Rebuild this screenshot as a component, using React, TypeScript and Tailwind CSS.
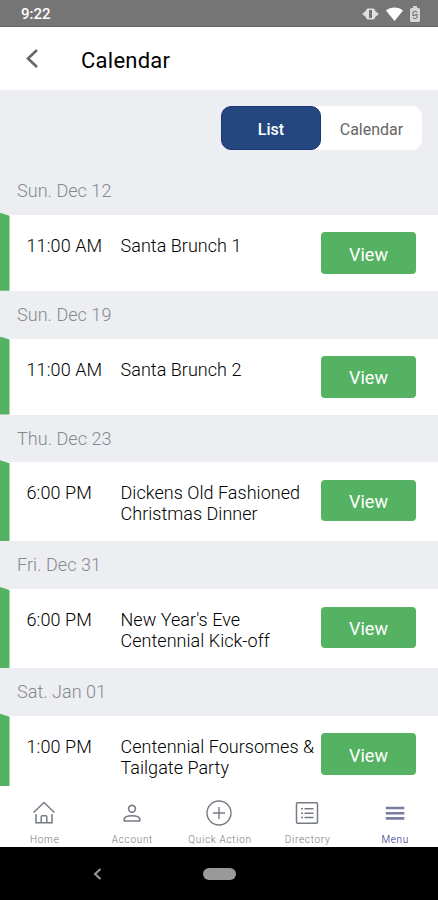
interface CalendarEvent {
  date: string;
  time: string;
  title: string[];
}

const events: CalendarEvent[] = [
  { date: 'Sun. Dec 12', time: '11:00 AM', title: ['Santa Brunch 1'] },
  { date: 'Sun. Dec 19', time: '11:00 AM', title: ['Santa Brunch 2'] },
  { date: 'Thu. Dec 23', time: '6:00 PM', title: ['Dickens Old Fashioned', 'Christmas Dinner'] },
  { date: 'Fri. Dec 31', time: '6:00 PM', title: ["New Year's Eve", 'Centennial Kick-off'] },
  { date: 'Sat. Jan 01', time: '1:00 PM', title: ['Centennial Foursomes &', 'Tailgate Party'] },
];

const StatusBar = () => (
  <div className="flex h-[27px] shrink-0 items-center justify-between border-b border-[#666] bg-[#757575] pr-[18px] pl-[21px] text-white">
    <span className="pt-[3px] text-[15px] font-medium">9:22</span>
    <div className="flex items-center gap-[7px] pt-px">
      <svg width="17" height="14" viewBox="0 0 17 14">
        <path d="M0 7l5-4v8zM17 7l-5-4v8z" fill="#ddd" />
        <rect x="4" y="1.5" width="9" height="11" rx="2" fill="#e0e0e0" />
        <rect x="7" y="3" width="3" height="8" fill="#757575" />
      </svg>
      <svg width="17" height="14" viewBox="0 0 17 14">
        <path d="M0 3.5C4.5-.5 12.5-.5 17 3.5L8.5 14z" fill="#fff" />
      </svg>
      <svg width="10" height="16" viewBox="0 0 10 16">
        <path d="M3 0h4v2h1.5Q10 2 10 3.5v11Q10 16 8.5 16h-7Q0 16 0 14.5v-11Q0 2 1.5 2H3z" fill="#d6d6d6" />
        <path d="M3 6.5Q5 4 7 6.5M7 11.5Q5 14 3 11.5M3 6.5v3h2.5M7 11.5v-3H5" fill="none" stroke="#757575" strokeWidth="1.2" />
      </svg>
    </div>
  </div>
);

const EventSection = ({ event }: { event: CalendarEvent }) => (
  <section>
    <h2 className="h-[47.75px] pl-[17px] text-[18px] leading-[48px] font-light tracking-[0.05px] text-[#85888f]">
      {event.date}
    </h2>
    <div className={`flex bg-white ${event.title.length > 1 ? 'h-[79px]' : 'h-[76px]'}`}>
      <div className="-mt-[2px] w-[9.5px] shrink-0 bg-[#55b262] [clip-path:polygon(0_0,100%_3px,100%_100%,0_100%)]" />
      <p className="w-[111px] shrink-0 pt-5 pl-[17px] text-[18px] leading-[21px] font-light tracking-[0.1px] text-black">
        {event.time}
      </p>
      <p className="w-[200.5px] shrink-0 pt-5 text-[18px] leading-[21px] font-light tracking-[0.03px] whitespace-nowrap text-black">
        {event.title.map((line) => (
          <span key={line} className="block">{line}</span>
        ))}
      </p>
      <button className="mt-[17.5px] h-[41.5px] w-[95px] shrink-0 rounded-[4px] bg-[#55b262] pt-[2px] text-[18px] text-white">
        View
      </button>
    </div>
  </section>
);

const HomeIcon = () => (
  <svg width="24" height="24" viewBox="0 0 24 24" fill="none" stroke="#777b86" strokeWidth="1.5">
    <path d="M1.5 11.5L12 1.5l10.5 10M4 13v8.8h16V13M9.2 21.8v-6q0-1 1-1h3.6q1 0 1 1v6" />
  </svg>
);

const AccountIcon = () => (
  <svg width="24" height="24" viewBox="0 0 24 24" fill="none" stroke="#777b86" strokeWidth="1.6">
    <circle cx="12" cy="7.8" r="3.4" />
    <path d="M4.2 20v-1.5c0-5 15.6-5 15.6 0V20z" strokeLinejoin="round" />
  </svg>
);

const QuickIcon = () => (
  <svg width="26" height="26" viewBox="0 0 26 26" fill="none" stroke="#777b86" strokeWidth="1.4">
    <circle cx="13" cy="13" r="12" />
    <path d="M13 7v12M7 13h12" />
  </svg>
);

const DirectoryIcon = () => (
  <svg width="24" height="24" viewBox="0 0 24 24" fill="none" stroke="#777b86" strokeWidth="1.5">
    <rect x="1.5" y="1.7" width="21" height="20.6" rx="1" />
    <path d="M6 7.8h2M6 12.2h2M6 16.6h2M9.5 7.8h9M9.5 12.2h9M9.5 16.6h9" />
  </svg>
);

const MenuIcon = () => (
  <svg width="24" height="24" viewBox="0 0 24 24" stroke="#777da3" strokeWidth="2.6">
    <path d="M2.8 7h18.5M2.8 12.2h18.5M2.8 17.4h18.5" />
  </svg>
);

const tabs = [
  { label: 'Home', Icon: HomeIcon },
  { label: 'Account', Icon: AccountIcon },
  { label: 'Quick Action', Icon: QuickIcon },
  { label: 'Directory', Icon: DirectoryIcon },
  { label: 'Menu', Icon: MenuIcon, active: true },
];

export default function App() {
  return (
    <div className="flex h-[900px] w-[438px] flex-col overflow-hidden bg-[#eceef2] font-['Roboto',sans-serif]">
      <StatusBar />
      <header className="flex h-[63px] shrink-0 items-center bg-white pl-[26px]">
        <svg width="12" height="19" viewBox="0 0 12 19" fill="none" stroke="#666" strokeWidth="2.6">
          <path d="M11 1L2 9.5l9 8.5" />
        </svg>
        <h1 className="pt-[3px] pl-[43px] text-[22px] tracking-[0.25px] text-black">Calendar</h1>
      </header>

      <main className="h-[696px] shrink-0 overflow-hidden">
        <div className="flex h-[77px] justify-end pt-4 pr-4">
          <div className="flex h-11 w-[201px] rounded-[10px] bg-white text-[16px]">
            <button className="w-[100px] rounded-[10px] border border-[#173779] bg-[#25477f] pt-[3px] font-medium text-white">
              List
            </button>
            <button className="flex-1 pt-[3px] text-[#666]">Calendar</button>
          </div>
        </div>
        {events.map((event) => (
          <EventSection key={event.date} event={event} />
        ))}
      </main>

      <nav className="grid h-[61px] shrink-0 grid-cols-5 bg-white">
        {tabs.map(({ label, Icon, active }) => (
          <div key={label} className="flex flex-col items-center">
            <div className="flex h-[46px] items-center pt-[7px] pl-px">
              <Icon />
            </div>
            <span
              className={`pl-[2px] text-[10px] leading-[15px] font-light tracking-[0.7px] whitespace-nowrap ${active ? 'text-[#20208a]' : 'text-[#77777c]'}`}
            >
              {label}
            </span>
          </div>
        ))}
      </nav>

      <div className="grid h-[53px] shrink-0 grid-cols-[1fr_33px_1fr] items-center bg-black">
        <svg className="ml-[93px]" width="9" height="12" viewBox="0 0 9 12" fill="none" stroke="#999" strokeWidth="2">
          <path d="M7.5 1L2 6l5.5 5" />
        </svg>
        <div className="h-3 rounded-full bg-[#999]" />
      </div>
    </div>
  );
}
